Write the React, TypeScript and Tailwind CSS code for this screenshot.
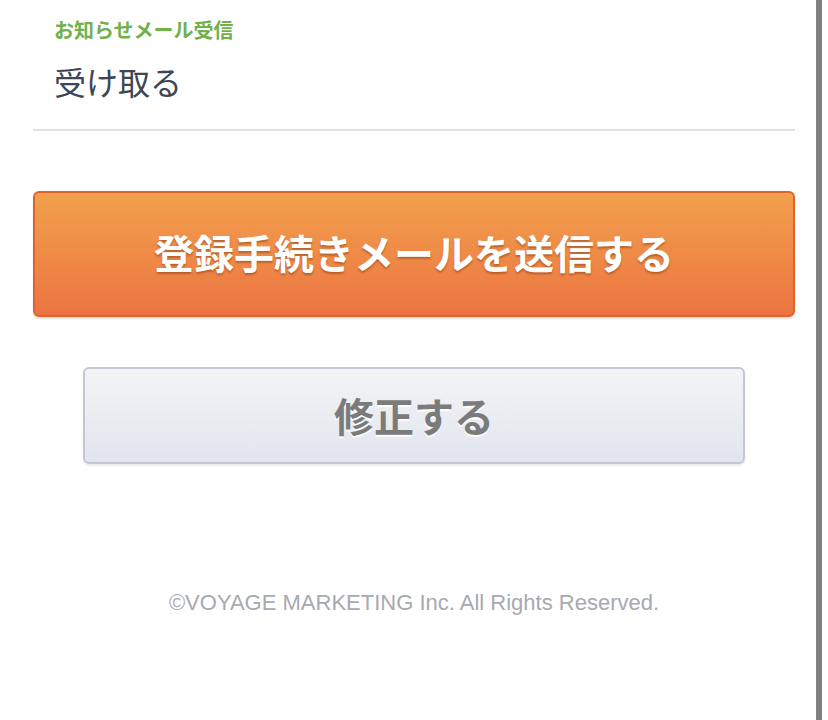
export default function App() {
  return (
    <div className="flex min-h-[720px] w-[828px] bg-white">
      <main className="w-[816px] font-['Noto_Sans_CJK_JP',sans-serif]">
        <section className="ml-[33px] mr-[21px] border-b-2 border-[#e2e2e2] px-[21px] pt-[16px] pb-[26px]">
          <p className="text-[20px] font-bold leading-[28px] text-[#72b04c]">お知らせメール受信</p>
          <p className="mt-[15px] text-[32px] leading-[44px] text-[#3e4652]">受け取る</p>
        </section>

        <div className="ml-[33px] mr-[21px] mt-[60px]">
          <button className="flex h-[126px] w-full items-center justify-center rounded-[6px] border-2 border-[#e0632e] bg-gradient-to-b from-[#f1a04d] to-[#ec7441] pb-[4px] text-[40px] font-bold text-white shadow-[0_2px_2px_rgba(0,0,0,0.12)] [text-shadow:0_2px_2px_rgba(120,50,10,0.45)]">
            登録手続きメールを送信する
          </button>
        </div>

        <div className="ml-[83px] mr-[71px] mt-[50px]">
          <button className="flex h-[97px] w-full items-center justify-center rounded-[6px] border-2 border-[#c3c7d3] bg-gradient-to-b from-[#f3f4f7] to-[#e2e5ee] pb-[2px] text-[40px] font-bold text-[#7b7b7b] shadow-[0_2px_2px_rgba(0,0,0,0.08)] [text-shadow:0_2px_1px_rgba(255,255,255,0.9)]">
            修正する
          </button>
        </div>

        <footer className="ml-[33px] mr-[21px] mt-[122px] text-center font-['Liberation_Sans',sans-serif] text-[22px] text-[#a8a9b1]">
          ©VOYAGE MARKETING Inc. All Rights Reserved.
        </footer>
      </main>
      <div className="w-[6px] bg-[#808080]" />
    </div>
  );
}
